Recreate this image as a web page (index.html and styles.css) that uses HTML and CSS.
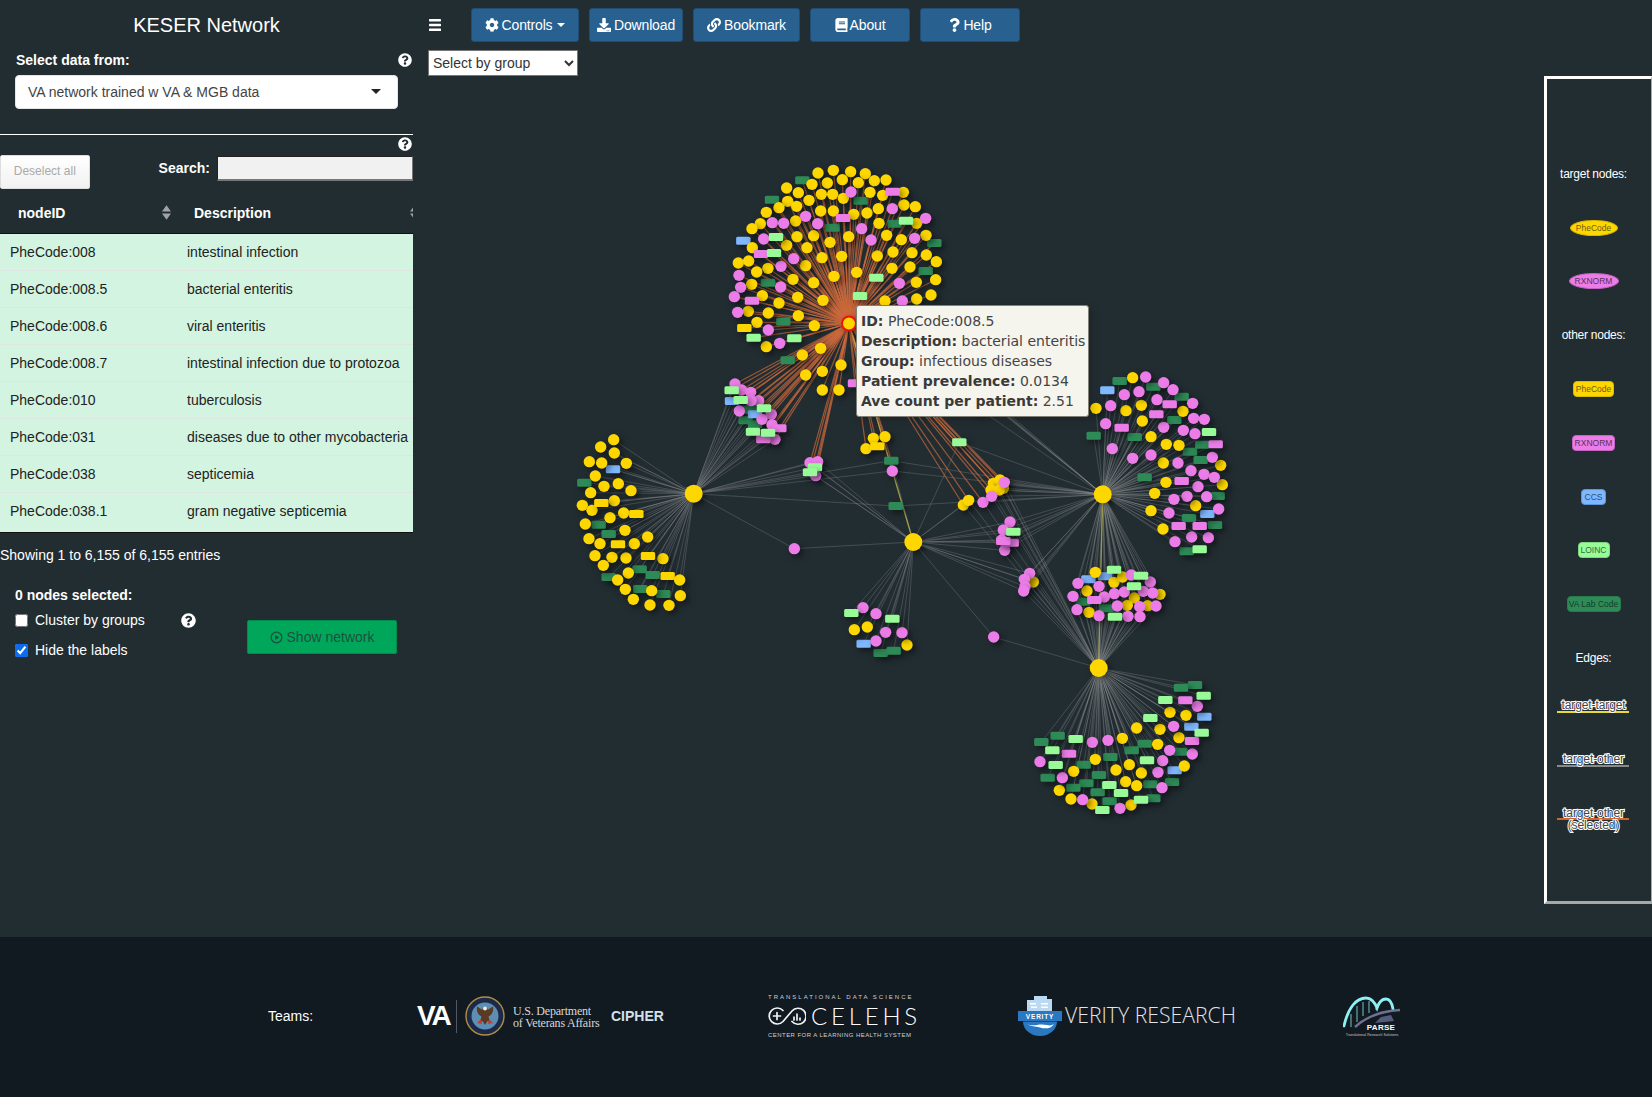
FILE: index.html
```html
<!DOCTYPE html>
<html lang="en">
<head>
<meta charset="utf-8">
<title>KESER Network</title>
<link rel="stylesheet" href="styles.css">
</head>
<body>
<svg class="icon-defs" aria-hidden="true">
  <defs>
    <symbol id="i-help" viewBox="0 0 512 512"><path d="M504 256c0 136.997-111.043 248-248 248S8 392.997 8 256C8 119.083 119.043 8 256 8s248 111.083 248 248zM262.655 90c-54.497 0-89.255 22.957-116.549 63.758-3.536 5.286-2.353 12.415 2.715 16.258l34.699 26.31c5.205 3.947 12.621 3.008 16.665-2.122 17.864-22.658 30.113-35.797 57.303-35.797 20.429 0 45.698 13.148 45.698 32.958 0 14.976-12.363 22.667-32.534 33.976C247.128 238.528 216 254.941 216 296v4c0 6.627 5.373 12 12 12h56c6.627 0 12-5.373 12-12v-1.333c0-28.462 83.186-29.647 83.186-106.667 0-58.002-60.165-102-116.531-102zM256 338c-25.365 0-46 20.635-46 46 0 25.364 20.635 46 46 46s46-20.636 46-46c0-25.365-20.635-46-46-46z"/></symbol>
    <symbol id="i-cog" viewBox="0 0 512 512"><path d="M487.4 315.7l-42.6-24.6c4.3-23.2 4.3-47 0-70.2l42.6-24.6c4.9-2.8 7.1-8.6 5.5-14-11.1-35.6-30-67.8-54.7-94.6-3.8-4.1-10-5.1-14.8-2.3L380.8 110c-17.9-15.4-38.5-27.3-60.8-35.1V25.8c0-5.6-3.9-10.5-9.4-11.7-36.7-8.2-74.3-7.8-109.2 0-5.5 1.2-9.4 6.1-9.4 11.7V75c-22.2 7.9-42.8 19.8-60.8 35.1L88.7 85.5c-4.9-2.8-11-1.9-14.8 2.3-24.7 26.7-43.6 58.9-54.7 94.6-1.7 5.4.6 11.2 5.5 14L67.3 221c-4.3 23.2-4.3 47 0 70.2l-42.6 24.6c-4.9 2.8-7.1 8.6-5.5 14 11.1 35.6 30 67.8 54.7 94.6 3.8 4.1 10 5.1 14.8 2.3l42.6-24.6c17.9 15.4 38.5 27.3 60.8 35.1v49.2c0 5.6 3.9 10.5 9.4 11.7 36.7 8.2 74.3 7.8 109.2 0 5.5-1.2 9.4-6.1 9.4-11.7v-49.2c22.2-7.9 42.8-19.8 60.8-35.1l42.6 24.6c4.9 2.8 11 1.9 14.8-2.3 24.7-26.7 43.6-58.9 54.7-94.6 1.5-5.5-.7-11.3-5.6-14.1zM256 336c-44.1 0-80-35.9-80-80s35.9-80 80-80 80 35.9 80 80-35.9 80-80 80z"/></symbol>
    <symbol id="i-download" viewBox="0 0 512 512"><path d="M216 0h80c13.3 0 24 10.7 24 24v168h87.7c17.8 0 26.7 21.5 14.1 34.1L269.7 378.3c-7.5 7.5-19.8 7.5-27.3 0L90.1 226.1c-12.6-12.6-3.7-34.1 14.1-34.1H192V24c0-13.3 10.7-24 24-24zm296 376v112c0 13.3-10.7 24-24 24H24c-13.3 0-24-10.7-24-24V376c0-13.3 10.7-24 24-24h146.7l49 49c20.1 20.1 52.5 20.1 72.6 0l49-49H488c13.3 0 24 10.7 24 24zm-124 88c0-11-9-20-20-20s-20 9-20 20 9 20 20 20 20-9 20-20zm64 0c0-11-9-20-20-20s-20 9-20 20 9 20 20 20 20-9 20-20z"/></symbol>
    <symbol id="i-link" viewBox="0 0 512 512"><path d="M326.612 185.391c59.747 59.809 58.927 155.698.36 214.59-.11.12-.24.25-.36.37l-67.2 67.2c-59.27 59.27-155.699 59.262-214.96 0-59.27-59.26-59.27-155.7 0-214.96l37.106-37.106c9.84-9.84 26.786-3.3 27.294 10.606.648 17.722 3.826 35.527 9.69 52.721 1.986 5.822.567 12.262-3.783 16.612l-13.087 13.087c-28.026 28.026-28.905 73.66-1.155 101.96 28.024 28.579 74.086 28.749 102.325.51l67.2-67.19c28.191-28.191 28.073-73.757 0-101.83-3.701-3.694-7.429-6.564-10.341-8.569a16.037 16.037 0 0 1-6.947-12.606c-.396-10.567 3.348-21.456 11.698-29.806l21.054-21.055c5.521-5.521 14.182-6.199 20.584-1.731a152.482 152.482 0 0 1 20.522 17.197zM467.547 44.449c-59.261-59.262-155.69-59.27-214.96 0l-67.2 67.2c-.12.12-.25.25-.36.37-58.566 58.892-59.387 154.781.36 214.59a152.454 152.454 0 0 0 20.521 17.196c6.402 4.468 15.064 3.789 20.584-1.731l21.054-21.055c8.35-8.35 12.094-19.239 11.698-29.806a16.037 16.037 0 0 0-6.947-12.606c-2.912-2.005-6.64-4.875-10.341-8.569-28.073-28.073-28.191-73.639 0-101.83l67.2-67.19c28.239-28.239 74.3-28.069 102.325.51 27.75 28.3 26.872 73.934-1.155 101.96l-13.087 13.087c-4.35 4.35-5.769 10.79-3.783 16.612 5.864 17.194 9.042 34.999 9.69 52.721.509 13.906 17.454 20.446 27.294 10.606l37.106-37.106c59.271-59.259 59.271-155.699.001-214.959z"/></symbol>
    <symbol id="i-book" viewBox="0 0 448 512"><path d="M448 360V24c0-13.3-10.7-24-24-24H96C43 0 0 43 0 96v320c0 53 43 96 96 96h328c13.3 0 24-10.7 24-24v-16c0-7.5-3.5-14.3-8.9-18.7-4.2-15.4-4.2-59.3 0-74.7 5.4-4.3 8.9-11.1 8.9-18.6zM128 134c0-3.3 2.7-6 6-6h212c3.3 0 6 2.7 6 6v20c0 3.3-2.7 6-6 6H134c-3.3 0-6-2.7-6-6v-20zm0 64c0-3.3 2.7-6 6-6h212c3.3 0 6 2.7 6 6v20c0 3.3-2.7 6-6 6H134c-3.3 0-6-2.7-6-6v-20zm253.4 250H96c-17.7 0-32-14.3-32-32 0-17.6 14.4-32 32-32h285.4c-1.9 17.1-1.9 46.9 0 64z"/></symbol>
    <symbol id="i-question" viewBox="0 0 384 512"><path d="M202.021 0C122.202 0 70.503 32.703 29.914 91.026c-7.363 10.58-5.093 25.086 5.178 32.874l43.138 32.709c10.373 7.865 25.132 6.026 33.253-4.148 25.049-31.381 43.63-49.449 82.757-49.449 30.764 0 68.816 19.799 68.816 49.631 0 22.552-18.617 34.134-48.993 51.164-35.423 19.86-82.299 44.576-82.299 106.405V320c0 13.255 10.745 24 24 24h72.471c13.255 0 24-10.745 24-24v-5.773c0-42.86 125.268-44.645 125.268-160.627C377.504 66.256 286.902 0 202.021 0zM192 373.459c-38.196 0-69.271 31.075-69.271 69.271 0 38.195 31.075 69.27 69.271 69.27s69.271-31.075 69.271-69.271-31.075-69.27-69.271-69.27z"/></symbol>
    <symbol id="i-sort" viewBox="0 0 10 16"><path d="M5 0 10 7H0zM5 16 0 9h10z"/></symbol>
  </defs>
</svg>

<div class="page">
  <div class="top">
    <aside class="sidebar">
      <h1 class="brand">KESER Network</h1>
      <div class="label-row">
        <span class="label">Select data from:</span>
        <svg class="help"><use href="#i-help"/></svg>
      </div>
      <div class="picker">
        <span>VA network trained w VA &amp; MGB data</span>
        <span class="picker-caret"></span>
      </div>
      <div class="divider"></div>
      <div class="help-row"><svg class="help"><use href="#i-help"/></svg></div>
      <div class="search-row">
        <button class="deselect" type="button">Deselect all</button>
        <label class="search-label">Search:</label>
        <input class="search-input" type="text">
      </div>
      <div class="table-wrap">
        <table class="nodes">
          <thead>
            <tr>
              <th class="col-id">nodeID<svg class="sort"><use href="#i-sort"/></svg></th>
              <th class="col-desc">Description<svg class="sort sort-clipped"><use href="#i-sort"/></svg></th>
            </tr>
          </thead>
          <tbody>
            <tr><td>PheCode:008</td><td>intestinal infection</td></tr>
            <tr><td>PheCode:008.5</td><td>bacterial enteritis</td></tr>
            <tr><td>PheCode:008.6</td><td>viral enteritis</td></tr>
            <tr><td>PheCode:008.7</td><td>intestinal infection due to protozoa</td></tr>
            <tr><td>PheCode:010</td><td>tuberculosis</td></tr>
            <tr><td>PheCode:031</td><td>diseases due to other mycobacteria</td></tr>
            <tr><td>PheCode:038</td><td>septicemia</td></tr>
            <tr><td>PheCode:038.1</td><td>gram negative septicemia</td></tr>
          </tbody>
        </table>
      </div>
      <div class="info">Showing 1 to 6,155 of 6,155 entries</div>
      <div class="selected-title">0 nodes selected:</div>
      <div class="options">
        <div class="checks">
          <label class="check"><input type="checkbox"><span>Cluster by groups</span><svg class="help help-inline"><use href="#i-help"/></svg></label>
          <label class="check"><input type="checkbox" checked><span>Hide the labels</span></label>
        </div>
        <button class="show-network" type="button">
          <svg class="play" viewBox="0 0 16 16"><circle cx="8" cy="8" r="6.6"/><path d="M6.2 4.8 11.2 8 6.2 11.2z"/></svg>
          Show network
        </button>
      </div>
    </aside>

    <main class="main">
      <svg id="network" class="network" viewBox="413 0 1239 937"></svg>
      <div class="toolbar">
        <svg class="bars" viewBox="0 0 12 12"><rect y="0" width="12" height="2.4" rx=".6"/><rect y="4.8" width="12" height="2.4" rx=".6"/><rect y="9.6" width="12" height="2.4" rx=".6"/></svg>
        <button class="act act-controls" type="button"><svg class="ico"><use href="#i-cog"/></svg>Controls<span class="act-caret"></span></button>
        <button class="act act-download" type="button"><svg class="ico"><use href="#i-download"/></svg>Download</button>
        <button class="act act-bookmark" type="button"><svg class="ico"><use href="#i-link"/></svg>Bookmark</button>
        <button class="act act-about" type="button"><svg class="ico ico-narrow"><use href="#i-book"/></svg>About</button>
        <button class="act act-help" type="button"><svg class="ico ico-narrow"><use href="#i-question"/></svg>Help</button>
      </div>
      <select class="group-select"><option>Select by group</option></select>

      <div class="tooltip">
        <div><b>ID:</b> PheCode:008.5</div>
        <div><b>Description:</b> bacterial enteritis</div>
        <div><b>Group:</b> infectious diseases</div>
        <div><b>Patient prevalence:</b> 0.0134</div>
        <div><b>Ave count per patient:</b> 2.51</div>
      </div>

      <div class="legend">
        <div class="leg-row leg-title">target nodes:</div>
        <div class="leg-row"><span class="leg-node ell yellow w48">PheCode</span></div>
        <div class="leg-row"><span class="leg-node ell pink w50">RXNORM</span></div>
        <div class="leg-row leg-title">other nodes:</div>
        <div class="leg-row"><span class="leg-node yellow w41">PheCode</span></div>
        <div class="leg-row"><span class="leg-node pink w43">RXNORM</span></div>
        <div class="leg-row"><span class="leg-node blue w25">CCS</span></div>
        <div class="leg-row"><span class="leg-node lime w32">LOINC</span></div>
        <div class="leg-row"><span class="leg-node green w54">VA Lab Code</span></div>
        <div class="leg-row leg-title">Edges:</div>
        <div class="leg-row leg-edge edge-yellow"><span>target-target</span></div>
        <div class="leg-row leg-edge edge-gray"><span>target-other</span></div>
        <div class="leg-row leg-edge edge-orange edge-two"><span>target-other<br>(selected)</span></div>
      </div>
    </main>
  </div>

  <footer class="footer">
    <div class="teams">Teams:</div>
    <div class="logo-va">
      <span class="va-mark">VA</span>
      <span class="va-sep"></span>
      <svg class="seal" viewBox="0 0 40 40">
        <circle cx="20" cy="20" r="19" fill="#1c2a48" stroke="#b08d45" stroke-width="1.4"/>
        <circle cx="20" cy="20" r="13.5" fill="#5d8fb5"/>
        <path d="M20 11c2 0 3 1.5 2.4 3l5.6-3.5c.8 4.5-.8 8.5-4.5 10l1.5 5.5-2.5-1-2.5 4-2.5-4-2.5 1 1.5-5.5c-3.7-1.5-5.3-5.500-4.500-10l5.600 3.500c-.6-1.500.4-3 2.400-3z" fill="#5a3a22"/>
        <circle cx="20" cy="12.500" r="2" fill="#f0ece0"/>
        <path d="M12 27l4-4 1 5zM28 27l-4-4-1 5z" fill="#c23b3b"/>
      </svg>
      <span class="va-name">U.S. Department<br>of Veterans Affairs</span>
    </div>
    <div class="logo-cipher">CIPHER</div>
    <div class="logo-celehs">
      <div class="celehs-small">TRANSLATIONAL DATA SCIENCE</div>
      <div class="celehs-main">
        <svg class="celehs-icon" viewBox="0 0 38 20" fill="none" stroke="#f2f2f2" stroke-width="1.7" stroke-linecap="round">
          <path d="M15 4.500A8 8 0 1 0 15 15.500L24 5A8 8 0 1 1 24 15.500"/>
          <path d="M9 6.500v7M5.500 10h7M26 14V11M29 14V8M32 14v-2"/>
        </svg>
        <span>CELEHS</span>
      </div>
      <div class="celehs-small celehs-bottom">CENTER FOR A LEARNING HEALTH SYSTEM</div>
    </div>
    <div class="logo-verity">
      <svg class="verity-icon" viewBox="0 0 44 40">
        <path d="M16 0h13v3h5v12H9V4h7z" fill="#bcd9f2"/>
        <path d="M12 7h6v1.500h-6zM13 10.500h6V12h-6zM23 7h7v1.500h-7zM23 10.500h7V12h-7z" fill="#fff"/>
        <path d="M0 15h44v10H0z" fill="#2a78c2"/>
        <text x="22" y="23.300" class="verity-badge">VERITY</text>
        <path d="M5 25.500h34A17 14.500 0 0 1 5 25.500z" fill="#2a78c2"/>
        <path d="M9 28c6 3 12-1 20 1 3 .8 5 .3 7-1-3 5-9 5-14 3.500-5-1.500-9-1-13-3.500z" fill="#fff"/>
      </svg>
      <span class="verity-name">VERITY RESEARCH</span>
    </div>
    <div class="logo-parse">
      <svg class="parse-icon" viewBox="0 0 58 40" fill="none">
        <path d="M1 30C5 12 13 2 23 2c6 0 9 5 11 10 2-6 5-9 9-9 4 0 6 4 7 10" stroke="#8ff0f4" stroke-width="2.800" stroke-linecap="round"/>
        <path d="M8 18v13M14 10v16M20 6v14M26 5v12M33 12v2" stroke="#8ff0f4" stroke-width=".8"/>
        <path d="M12 31C24 20 38 15 57 14" stroke="#6f7190" stroke-width="2.400"/>
        <path d="M32 27l6-6 10-2 3 6z" fill="#565a7c"/>
        <text x="38" y="34" class="parse-word">PARSE</text>
        <text x="29" y="39.500" class="parse-tiny">Translational Research Solutions</text>
      </svg>
    </div>
  </footer>
</div>
<script src="script.js"></script>
</body>
</html>
```
FILE: styles.css
```css
* { box-sizing: border-box; }
html, body { margin: 0; padding: 0; }
body {
  width: 1652px;
  height: 1097px;
  overflow: hidden;
  background: #222d32;
  color: #fff;
  font: 14px/20px "Liberation Sans", Arial, sans-serif;
}
.icon-defs { position: absolute; width: 0; height: 0; }
.page { display: flex; flex-direction: column; height: 1097px; }
.top { display: flex; height: 937px; }

/* sidebar */
.sidebar { width: 413px; flex: none; }
.brand { margin: 0; height: 48px; font-size: 20px; font-weight: 400; line-height: 51px; text-align: center; }
.help { width: 14px; height: 14px; fill: #fff; display: block; }
.label-row { display: flex; justify-content: space-between; align-items: center; height: 24px; padding: 0 1px 0 16px; }
.label { font-weight: 700; }
.picker {
  display: flex; justify-content: space-between; align-items: center;
  width: 383px; height: 34px; margin: 3px 0 0 15px; padding: 0 16px 0 12px;
  background: #fff; border: 1px solid #e6e6e6; border-radius: 4px; color: #444;
}
.picker-caret { width: 0; height: 0; border: 5px solid transparent; border-top-color: #222; border-bottom: 0; margin-top: -2px; }
.divider { height: 1px; margin-top: 25px; background: #fff; }
.help-row { display: flex; justify-content: flex-end; padding: 2px 1px 0 0; height: 20px; }
.search-row { display: flex; align-items: flex-start; height: 35px; }
.deselect {
  width: 90px; height: 34px; padding: 0 0 3px; background: linear-gradient(#fff, #f1f1f1);
  border: 1px solid #ddd; border-radius: 2px; color: #aaa; font: 12px "Liberation Sans", Arial, sans-serif;
}
.search-label { margin: 3px 7px 0 69px; font-weight: 700; }
.search-input {
  width: 197px; height: 25px; margin-top: 1px; padding: 0; background: #f2f1f1;
  border: 1px solid; border-color: #222 #777 #777 #222; border-width: 1px 1px 2px 1px;
}
.table-wrap { width: 413px; overflow: hidden; background: #d2f4e1; border-bottom: 1px solid #111; padding-bottom: 3px; }
.nodes { width: 430px; border-collapse: collapse; table-layout: fixed; color: #222; }
.nodes th { position: relative; height: 43px; padding: 4px 0 0 18px; background: #222d32; color: #fff; text-align: left; border-bottom: 1px solid #111; }
.col-id { width: 177px; }
.nodes th.col-desc { padding-left: 17px; }
.sort { position: absolute; top: 15px; right: 6px; width: 9px; height: 15px; fill: #a0a3a5; }
.sort-clipped { right: 11px; }
.nodes td { height: 37px; padding: 0 0 0 10px; border-top: 1px solid #dfe6e1; white-space: nowrap; }
.nodes tbody tr:first-child td { border-top: 0; }
.info { margin-top: 12px; }
.selected-title { margin-top: 20px; padding-left: 15px; font-weight: 700; }
.options { display: flex; }
.checks { width: 247px; padding-left: 15px; }
.check { display: flex; align-items: center; height: 30px; }
.check input { width: 13px; height: 13px; margin: 0 7px 0 0; accent-color: #0b6cf0; }
.help-inline { margin-left: 36px; width: 15px; height: 15px; }
.show-network {
  display: flex; align-items: center; justify-content: center; gap: 4px;
  width: 150px; height: 34px; margin-top: 15px; padding: 0;
  background: #00a65a; border: 1px solid #008d4c; border-radius: 2px;
  color: rgba(40, 50, 55, .75); font: 14px "Liberation Sans", Arial, sans-serif;
}
.play { width: 13px; height: 13px; fill: none; stroke: rgba(40, 50, 55, .75); stroke-width: 1.5; }
.play path { fill: rgba(40, 50, 55, .75); stroke: none; }

/* main */
.main { position: relative; flex: 1; }
.network { position: absolute; inset: 0; width: 1239px; height: 937px; }
.toolbar { position: relative; display: flex; align-items: center; padding: 8px 0 0 16px; }
.bars { width: 12px; height: 12px; margin-right: 30px; fill: #fff; }
.act {
  display: flex; align-items: center; justify-content: center; height: 34px; padding: 0;
  background: #28608f; border: 1px solid #204d74; border-radius: 3px; color: #fff;
  font: 14px "Liberation Sans", Arial, sans-serif; letter-spacing: -.15px;
}
.act-controls { width: 108px; }
.act-download { width: 94px; margin-left: 10px; }
.act-bookmark { width: 107px; margin-left: 10px; }
.act-about { width: 100px; margin-left: 10px; }
.act-help { width: 100px; margin-left: 10px; }
.ico { width: 14px; height: 14px; fill: #fff; margin-right: 3px; flex: none; }
.ico-narrow { width: 13px; margin-right: 2px; }
.act-caret { width: 0; height: 0; margin-left: 5px; border: 4px solid transparent; border-top-color: #fff; border-bottom: 0; }
.group-select {
  position: relative; display: block; width: 150px; height: 26px; margin: 8px 0 0 15px;
  background: #fff; border: 1px solid #767676; border-radius: 0; color: #333;
  font: 14px "Liberation Sans", Arial, sans-serif;
}

/* network */
.edge { fill: none; stroke-width: 1; }
.edge-g { stroke: rgba(170, 170, 170, .25); }
.edge-s { stroke: rgba(205, 105, 60, .7); stroke-width: 1.2; }
.edge-t { stroke: rgba(205, 195, 70, .65); stroke-width: 1.3; }
.node { filter: drop-shadow(3px 3px 3px rgba(0, 0, 0, .5)); }
.n-y { fill: #ffd700; }
.n-p { fill: #ec7de8; }
.n-G { fill: #2e8b57; }
.n-L { fill: #98fb98; }
.n-B { fill: #7fb8ff; }
.n-sel { fill: #ffd700; stroke: #f01010; stroke-width: 2; }
.tooltip {
  position: absolute; left: 443px; top: 305px; width: 233px; height: 112px; padding: 5px 4px;
  background: #f5f4ed; border: 1px solid #808074; border-radius: 3px;
  box-shadow: 3px 3px 10px rgba(0, 0, 0, .2); color: #444;
  font: 14px/20px "DejaVu Sans", sans-serif; white-space: nowrap;
}
.tooltip b { color: #3a3a3a; }

/* legend */
.legend {
  position: absolute; left: 1131px; top: 76px; width: 108px; height: 828px; padding: 68px 11px 0 0;
  display: flex; flex-direction: column; align-items: center;
  border: 3px solid; border-color: #fff #a8a8a8 #a8a8a8 #fff; border-right-width: 1px; background: #222d32;
}
.leg-row { position: relative; display: flex; align-items: center; justify-content: center; height: 53.8px; flex: none; width: 100%; }
.leg-title { font-size: 12px; letter-spacing: -.25px; }
.leg-node { display: flex; align-items: center; justify-content: center; height: 16px; border-radius: 4px; font-size: 8.5px; line-height: 16px; white-space: nowrap; }
.ell { border-radius: 50%; }
.yellow { background: #ffd700; border: 1px solid #d9b800; color: #6b5c10; }
.pink { background: #ec7de8; border: 1px solid #c563c2; color: #5a2f5c; }
.blue { background: #7fb8ff; border: 1px solid #5f94d8; color: #2d4f78; }
.lime { background: #98fb98; border: 1px solid #7fd87f; color: #2f6d3d; }
.green { background: #2e8b57; border: 1px solid #287a4c; color: #123f28; }
.w48 { width: 48px; } .w50 { width: 50px; } .w41 { width: 41px; } .w43 { width: 43px; }
.w25 { width: 25px; } .w32 { width: 32px; } .w54 { width: 54px; }
.leg-edge span {
  position: relative; padding-bottom: 13px; text-align: center; font-size: 12px; line-height: 12px; letter-spacing: -.1px;
  color: #444; -webkit-text-stroke: 2px #fff; paint-order: stroke fill;
}
.edge-two span { padding-bottom: 0; }
.leg-edge::before { content: ""; position: absolute; left: 10px; width: 72px; top: 50%; height: 2px; margin-top: -1px; }
.edge-yellow::before { background: #e6d93c; }
.edge-gray::before { background: #8a8a8a; }
.edge-orange::before { background: #d2652e; }

/* footer */
.footer {
  display: grid; grid-template-columns: 149px 194px 157px 250px 325px 58px; align-items: center;
  height: 160px; padding: 0 0 2px 268px; background: #111921;
}
.logo-va { display: flex; align-items: center; }
.va-mark { width: 32px; font-size: 28px; font-weight: 700; letter-spacing: -2.2px; line-height: 34px; }
.va-sep { width: 1px; height: 33px; margin: 0 8px 0 7px; background: #556; }
.seal { width: 40px; height: 40px; flex: none; }
.va-name { margin: 3px 0 0 8px; color: #d8d8d8; font: 12px/11.5px "Liberation Serif", serif; white-space: nowrap; letter-spacing: -.2px; }
.logo-cipher { color: #d5e0ea; font-size: 14px; font-weight: 700; }
.logo-celehs { width: 148px; }
.celehs-small { font-size: 6px; line-height: 8px; letter-spacing: 2px; white-space: nowrap; color: #d0d0d0; }
.celehs-bottom { letter-spacing: .45px; }
.celehs-main { display: flex; align-items: center; height: 26px; margin: 2px 0; }
.celehs-icon { width: 38px; height: 20px; flex: none; }
.celehs-main span { margin-left: 5px; font: 300 24px/26px "Lato", sans-serif; letter-spacing: 3.8px; white-space: nowrap; }
.logo-verity { display: flex; align-items: center; }
.verity-icon { width: 44px; height: 40px; flex: none; }
.verity-badge { fill: #fff; font: 700 6.5px "Liberation Sans", sans-serif; letter-spacing: .8px; text-anchor: middle; }
.verity-name { margin: -2px 0 0 3px; color: #e4e4e4; font: 300 21.2px/30px "Open Sans", sans-serif; white-space: nowrap; }
.parse-icon { display: block; width: 58px; height: 40px; }
.parse-word { fill: #fff; font: 700 8px "Liberation Sans", sans-serif; text-anchor: middle; letter-spacing: .3px; }
.parse-tiny { fill: #c8c8c8; font: 3.6px "Liberation Sans", sans-serif; text-anchor: middle; }
.teams { white-space: nowrap; }
```
FILE: script.js
```js
// Network drawing: node positions are read off the picture, in three local frames at 3x scale.
var FRAMES = { a: [700, 150], b: [560, 360], c: [1000, 360] };
var HUBS = {
  S: [849, 323.5],
  L: [693.7, 493.7],
  C: [913.3, 542],
  R: [1102.7, 494.3],
  B: [1098.7, 668]
};
var CLUSTERS = [
  { f: 'a', hubs: 'S',
    y: [354,69,400,61,452,65,496,71,523,92,558,90,427,89,382,99,336,103,475,98,260,114,295,128,364,133,398,133,430,145,510,127,548,136,610,127,612,165,646,170,263,154,327,151,290,169,237,173,199,187,362,183,400,183,461,193,501,189,535,176,287,213,181,221,156,236,537,220,650,220,291,260,341,257,446,260,390,277,560,256,604,269,678,256,260,286,157,293,321,293,579,306,636,308,366,323,425,319,532,318,679,315,115,339,146,333,709,335,204,355,317,347,170,366,576,355,630,351,402,379,470,367,279,388,341,398,155,403,649,397,707,389,187,437,293,442,369,451,237,459,555,453,650,447,693,435,145,484,205,489,295,497,171,517,343,527,199,590,307,615,362,595,423,645,317,675,367,664,367,720,417,720],
    p: [453,126,577,176,317,199,217,218,251,220,353,221,677,205,485,236,191,267,513,270,644,265,281,326,243,349,117,376,122,412,242,411,598,400,103,440,113,487,607,453,205,540,239,580],
    G: [307,91,216,149,482,152,397,233,584,221,703,279,677,363,204,398,250,515,263,631],
    P: [578,125,429,204,183,312,156,452,465,700],
    L: [618,212,228,261,222,309,529,383,480,438,161,563,283,565],
    B: [130,272],
    Y: [133,534] },
  { f: 'b', hubs: 'SL',
    p: [525,72,545,90,572,97,596,122,573,122,538,153,634,163,606,178,636,194,645,238],
    G: [570,150,557,181,585,193],
    B: [516,123,585,163],
    P: [658,205,610,238],
    L: [515,91,542,120,612,145,579,215,624,218] },
  { f: 'b', hubs: 'SLC', p: [750,308,773,305,767,347], L: [765,322,750,337] },
  { f: 'b', hubs: 'S', y: [940,235,975,230,918,266], Y: [952,259] },
  { f: 'b', hubs: 'SLCR', G: [994,302], p: [997,333] },
  { f: 'b', hubs: 'LR', G: [1007,438] },
  { f: 'b', hubs: 'SCR', L: [1198,247] },
  { f: 'b', hubs: 'SCB', y: [1210,435,1226,421] },
  { f: 'b', hubs: 'SRB', y: [1300,370,1320,360,1293,390,1330,385,1318,390], p: [1269,427,1295,409,1333,367] },
  { f: 'b', hubs: 'RC', P: [1355,548,1330,543], p: [1350,486,1330,510,1325,540,1334,571], L: [1360,515] },
  { f: 'b', hubs: 'RCB', y: [1420,666], p: [1409,640,1393,658,1395,680,1391,693] },
  { f: 'b', hubs: 'L',
    y: [161,239,122,261,163,279,88,305,125,309,199,310,106,348,132,379,175,371,92,398,213,392,67,436,163,422,96,451,191,459,150,473,76,492,195,511,87,536,263,531,120,551,223,551,105,587,156,592,198,594,130,616,309,596],
    G: [73,368,116,494,146,522,239,628,278,645,146,651,241,687,310,702],
    Y: [124,429,229,462,174,553,264,588,323,648],
    B: [159,328] },
  { f: 'b', hubs: 'L', y: [205,639,173,660,359,660,196,688,275,692,361,707,220,718,270,735,327,736] },
  { f: 'b', hubs: 'LC', p: [703,566] },
  { f: 'b', hubs: 'CB', p: [1301,831] },
  { f: 'b', hubs: 'C',
    G: [962,879,1001,872], B: [911,851], L: [874,759,997,776],
    y: [883,809,922,801,1041,855], p: [909,743,948,761,977,817,1026,818,948,843] },
  { f: 'c', hubs: 'R',
    G: [359,63,460,80,545,110,523,180,404,231,281,227,570,275,607,254,602,300,434,352,653,408,567,474,645,495,560,574],
    y: [398,53,424,136,378,152,549,154,427,183,288,145,453,230,499,253,537,256,490,309,662,316,498,367,667,374,464,400,587,437,453,452,489,507],
    p: [437,51,491,68,519,89,373,104,417,95,471,119,332,137,578,130,581,175,613,178,317,191,491,202,550,211,585,221,337,266,398,295,453,285,534,309,637,292,573,332,612,343,643,352,594,380,561,409,522,418,620,410,507,459,656,447,575,531,625,533,525,545],
    B: [322,91,622,462],
    P: [509,133,469,163,365,203,647,253,545,363,536,498,599,498],
    L: [627,216,599,568] },
  { f: 'c', hubs: 'RB',
    G: [320,745,250,725],
    B: [265,658,315,649],
    y: [286,637,342,667,368,651,261,693,403,714,382,736,480,703,267,757,443,737],
    p: [234,670,394,645,451,666,297,679,219,709,313,711,343,701,373,696,430,694,458,699,352,738,419,740,468,738,231,749,297,767,384,769,420,770],
    P: [283,720],
    L: [342,629,423,647,402,679,345,770] },
  { f: 'c', hubs: 'B',
    G: [585,975,543,983,173,1127,124,1146,434,1151,395,1171,331,1191,251,1214,297,1245,143,1253,259,1270,220,1283,293,1297,451,1273,516,1266,460,1315,329,1324,541,1175],
    B: [613,1070,574,1100,524,1231],
    y: [510,1057,558,1066,410,1104,480,1108,537,1133,367,1135,473,1153,286,1198,388,1214,348,1230,221,1234,424,1239,553,1218,377,1265,410,1277,178,1291,213,1317,276,1332,393,1335],
    p: [592,1039,521,1099,277,1147,324,1141,509,1171,577,1182,120,1205,488,1202,474,1237,187,1253,486,1283,248,1319,360,1345],
    L: [611,1007,496,1020,451,1074,605,1118,227,1137,157,1171,441,1201,167,1215,328,1275,363,1299,423,1319,307,1350],
    P: [556,1021,576,1143,207,1181] },
  // nodes hidden behind the tooltip: only their edges show
  { f: 'a', hubs: 'SR', y: [760,650,790,690,820,720,850,740,880,760,835,775] }
];
var NS = 'http://www.w3.org/2000/svg';
var svg = document.getElementById('network');
var edgeLayer = document.createElementNS(NS, 'g');
var nodeLayer = document.createElementNS(NS, 'g');
svg.appendChild(edgeLayer);
svg.appendChild(nodeLayer);

function add(layer, tag, cls, attrs) {
  var el = document.createElementNS(NS, tag);
  el.setAttribute('class', cls);
  for (var k in attrs) el.setAttribute(k, attrs[k]);
  layer.appendChild(el);
}
function line(a, b, cls) {
  add(edgeLayer, 'line', 'edge ' + cls, { x1: a[0], y1: a[1], x2: b[0], y2: b[1] });
}
function circle(x, y, r, cls) {
  add(nodeLayer, 'circle', 'node ' + cls, { cx: x, cy: y, r: r });
}
function box(x, y, cls) {
  add(nodeLayer, 'rect', 'node ' + cls, { x: x - 7.2, y: y - 4, width: 14.4, height: 8, rx: 1.5 });
}

var ORDER = ['G', 'B', 'y', 'p', 'Y', 'P', 'L'];
CLUSTERS.forEach(function (c) {
  var o = FRAMES[c.f];
  ORDER.forEach(function (t) {
    var pts = c[t];
    if (!pts) return;
    for (var i = 0; i < pts.length; i += 2) {
      var x = o[0] + pts[i] / 3, y = o[1] + pts[i + 1] / 3;
      c.hubs.split('').forEach(function (h) {
        line(HUBS[h], [x, y], h === 'S' ? 'edge-s' : 'edge-g');
      });
      if (t === 'y') circle(x, y, 5.7, 'n-y');
      else if (t === 'p') circle(x, y, 5.7, 'n-p');
      else if (t === 'Y') box(x, y, 'n-y');
      else if (t === 'P') box(x, y, 'n-p');
      else box(x, y, 'n-' + t);
    }
  });
});
line(HUBS.S, HUBS.C, 'edge-t');
line(HUBS.R, HUBS.B, 'edge-t');
['L', 'C', 'R', 'B'].forEach(function (h) { circle(HUBS[h][0], HUBS[h][1], 9, 'n-y'); });
circle(HUBS.S[0], HUBS.S[1], 7, 'n-sel');
```
